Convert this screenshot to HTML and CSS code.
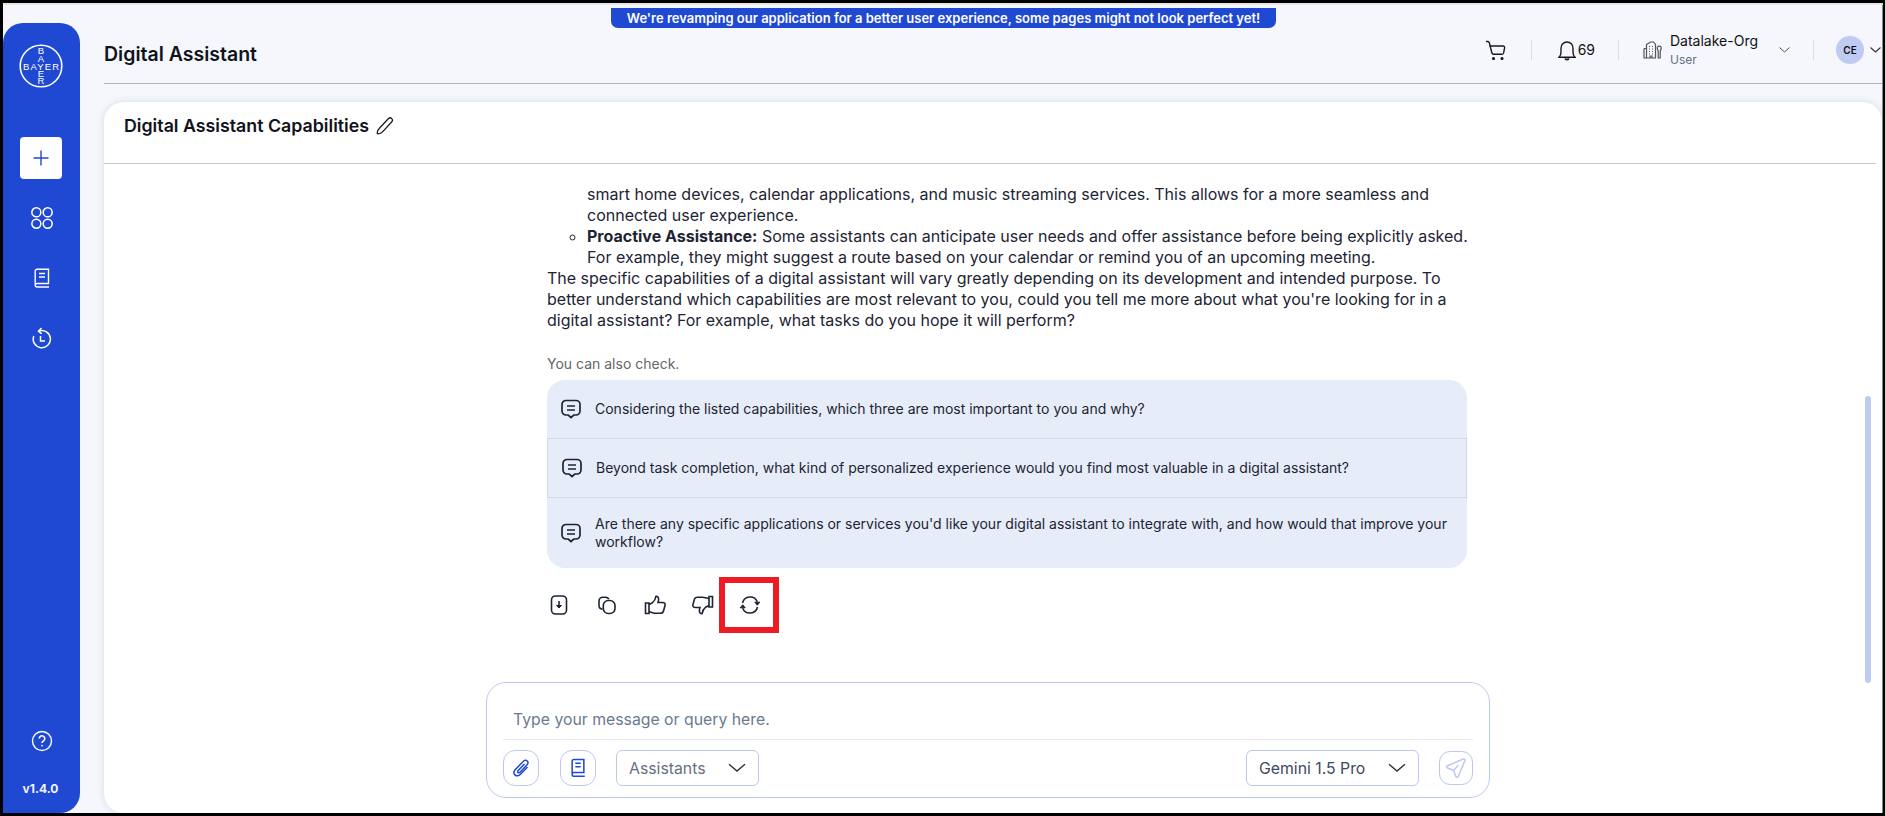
FILE: index.html
```html
<!DOCTYPE html>
<html lang="en">
<head>
<meta charset="utf-8">
<title>Digital Assistant</title>
<link rel="stylesheet" href="styles.css">
</head>
<body>
<div class="frame">
  <div class="top-line"></div>
  <div class="shell">
    <aside class="sidebar">
      <svg class="logo" viewBox="0 0 44 44" width="44" height="44">
        <circle cx="22" cy="22" r="20.8" fill="none" stroke="#fff" stroke-width="1.6"/>
        <text class="logo-text" x="4" y="25.500" textLength="36" lengthAdjust="spacing">BAYER</text>
        <text class="logo-text logo-mid" x="22" y="10.200">B</text>
        <text class="logo-text logo-mid" x="22" y="17.600">A</text>
        <text class="logo-text logo-mid" x="22" y="33">E</text>
        <text class="logo-text logo-mid" x="22" y="40.400">R</text>
      </svg>
      <button class="new-btn">
        <svg viewBox="0 0 18 18" width="18" height="18"><path d="M9 1.5v15M1.5 9h15" stroke="#1f48d3" stroke-width="1.4" fill="none"/></svg>
      </button>
      <nav class="side-nav">
        <svg class="apps-icon" viewBox="0 0 22 22" width="24" height="24" fill="none" stroke="#fff" stroke-width="1.4"><rect x="1.7" y="1.7" width="8.2" height="8.2" rx="4"/><rect x="12.1" y="1.7" width="8.2" height="8.2" rx="4"/><rect x="1.7" y="12.1" width="8.2" height="8.2" rx="4"/><rect x="12.1" y="12.1" width="8.2" height="8.2" rx="4"/></svg>
        <svg viewBox="0 0 22 22" width="22" height="22" fill="none" stroke="#fff" stroke-width="1.4"><path d="M4.2 17V4.200A2 2 0 0 1 6.200 2.200h11.300V16.500H6.200A2 2 0 0 0 4.200 18.500 2 2 0 0 0 6.200 20H18"/><path d="M8 6.500h6M8 10h6"/></svg>
        <svg viewBox="0 0 22 22" width="22" height="22" fill="none" stroke="#fff" stroke-width="1.5"><path d="M8 4a8.600 8.600 0 1 1-5.200 5"/><path d="M10.500 1 7.500 4.200l3.200 2.600"/><path d="M9.500 9v5h4.500"/></svg>
      </nav>
      <div class="side-foot">
        <svg viewBox="0 0 22 22" width="22" height="22" fill="none" stroke="#fff" stroke-width="1.4"><circle cx="11" cy="11" r="9.500"/><path d="M8.200 8.600a2.800 2.800 0 1 1 4.400 2.300c-1 .7-1.600 1.100-1.600 2.100" stroke-width="1.600"/><circle cx="11" cy="15.600" r=".9" fill="#fff" stroke="none"/></svg>
        <span class="version">v1.4.0</span>
      </div>
    </aside>
    <div class="main">
      <div class="banner">We're revamping our application for a better user experience, some pages might not look perfect yet!</div>
      <header class="topbar">
        <h1 class="page-title">Digital Assistant</h1>
        <div class="top-actions">
          <svg class="cart" viewBox="0 0 22 21" width="22" height="21" fill="none" stroke="#1a1a1a" stroke-width="1.4"><path d="M1 1.500h1.800c.8 0 1.200.4 1.500 1.200l2.600 10.300c.2.800.8 1.300 1.600 1.300h8.200c1 0 1.600-.5 1.900-1.400l1-4.900c.2-1.300-.5-2-1.800-2H4.200"/><circle cx="8.500" cy="18.500" r=".9" fill="#1a1a1a"/><circle cx="17" cy="18.500" r=".9" fill="#1a1a1a"/></svg>
          <span class="sep"></span>
          <div class="bell-group">
            <svg viewBox="0 0 18 21" width="18" height="21" fill="none" stroke="#1a1a1a" stroke-width="1.4"><path d="M1 17.300c1.500-1.300 2-2.500 2-5V8a6 6 0 0 1 12 0v4.300c0 2.500.5 3.700 2 5z"/><path d="M7 18.500c.3 1.700 3.700 1.700 4 0" fill="#1a1a1a"/></svg>
            <span class="bell-count">69</span>
          </div>
          <span class="sep"></span>
          <div class="org">
            <svg viewBox="0 0 19 18" width="19" height="18" fill="none" stroke="#555" stroke-width="1.200"><path d="M1 7.500h2.500M1 7.500V17h2.500"/><path d="M3.500 3.500l4-2.500h3l2 2.500V17h-9z"/><path d="M6 5.500h1M9 5.500h1M6 8h1M9 8h1M6 10.500h1M9 10.500h1M6 13h1M9 13h1M7 17v-2h2v2"/><path d="M14.500 8a2 2 0 1 1 3.500 0c0 1-.8 1.300-.8 2.500V17h-2v-6.500c0-1.200-.7-1.500-.7-2.500z"/></svg>
            <div class="org-text">
              <div class="org-name">Datalake-Org</div>
              <div class="org-role">User</div>
            </div>
            <svg class="org-chev" viewBox="0 0 11 6" width="11" height="6" fill="none" stroke="#555" stroke-width="1"><path d="M.5.500l5 4.500 5-4.500"/></svg>
          </div>
          <span class="sep sep-last"></span>
          <div class="avatar">CE</div>
          <svg class="avatar-chev" viewBox="0 0 11 6" width="11" height="6" fill="none" stroke="#333" stroke-width="1.100"><path d="M.5.500l5 4.500 5-4.500"/></svg>
        </div>
      </header>
      <section class="card">
        <div class="card-head">
          <h2 class="card-title">Digital Assistant Capabilities</h2>
          <svg viewBox="0 0 18 18" width="18" height="18" fill="none" stroke="#1a1a1a" stroke-width="1.300"><path d="M12.500 1.500c1-.9 2.300-.8 3.200.1s1 2.200.1 3.200L6.800 14.600c-1.200 1.300-3 2.100-4.800 2.200-.6 0-.9-.3-.8-.9.1-1.800.9-3.500 2.200-4.700z"/></svg>
        </div>
        <div class="chat">
          <ul class="answer-list">
            <li class="no-mark">smart home devices, calendar applications, and music streaming services. This allows for a more seamless and connected user experience.</li>
            <li><strong>Proactive Assistance:</strong> Some assistants can anticipate user needs and offer assistance before being explicitly asked. For example, they might suggest a route based on your calendar or remind you of an upcoming meeting.</li>
          </ul>
          <p class="answer">The specific capabilities of a digital assistant will vary greatly depending on its development and intended purpose. To better understand which capabilities are most relevant to you, could you tell me more about what you're looking for in a digital assistant? For example, what tasks do you hope it will perform?</p>
          <p class="also">You can also check.</p>
          <div class="chips">
            <div class="chip chip-a">
              <svg viewBox="0 0 20 20" width="20" height="20" fill="none" stroke="#1d2433" stroke-width="1.700"><path d="M5 1.500h10a4 4 0 0 1 4 4v6.500a4 4 0 0 1-4 4h-2.200l-2.800 2.500-2.800-2.500H5a4 4 0 0 1-4-4V5.500a4 4 0 0 1 4-4z"/><path d="M6 7h8M6 11h8"/></svg>
              <span>Considering the listed capabilities, which three are most important to you and why?</span>
            </div>
            <div class="chip chip-b">
              <svg viewBox="0 0 20 20" width="20" height="20" fill="none" stroke="#1d2433" stroke-width="1.700"><path d="M5 1.500h10a4 4 0 0 1 4 4v6.500a4 4 0 0 1-4 4h-2.200l-2.800 2.500-2.800-2.500H5a4 4 0 0 1-4-4V5.500a4 4 0 0 1 4-4z"/><path d="M6 7h8M6 11h8"/></svg>
              <span>Beyond task completion, what kind of personalized experience would you find most valuable in a digital assistant?</span>
            </div>
            <div class="chip chip-c">
              <svg viewBox="0 0 20 20" width="20" height="20" fill="none" stroke="#1d2433" stroke-width="1.700"><path d="M5 1.500h10a4 4 0 0 1 4 4v6.500a4 4 0 0 1-4 4h-2.200l-2.800 2.500-2.800-2.500H5a4 4 0 0 1-4-4V5.500a4 4 0 0 1 4-4z"/><path d="M6 7h8M6 11h8"/></svg>
              <span>Are there any specific applications or services you'd like your digital assistant to integrate with, and how would that improve your workflow?</span>
            </div>
          </div>
          <div class="actions">
            <span class="act"><svg viewBox="0 0 20 20" width="20" height="20" fill="none" stroke="#1d2433" stroke-width="1.600"><rect x="2.500" y="1" width="15" height="18" rx="4"/><path d="M10 6v6"/><path d="M7.500 10.500l2.500 2.500 2.500-2.500z" fill="#1d2433" stroke-width="1"/></svg></span>
            <span class="act"><svg viewBox="0 0 20 20" width="20" height="20" fill="none" stroke="#1d2433" stroke-width="1.600"><path d="M5.500 14.200c-2-.2-3.500-1.600-3.500-3.700V6.200c0-2.400 1.500-4 4-4h2.500c1.500 0 2.700.7 3.300 2"/><rect x="6.300" y="5.500" width="11.700" height="13" rx="5"/></svg></span>
            <span class="act"><svg viewBox="0 0 22 20" width="22" height="20" fill="none" stroke="#1d2433" stroke-width="1.600"><path d="M1.500 8h3.500v10.500H1.500z"/><path d="M5 9.500l3.500-1.800c1.700-1.200 3-3.700 3.300-6.200 2.500-.5 3.500 2 2.200 6h4.500c2 0 3 1.300 2.500 3l-1.500 5.500c-.4 1.500-1.500 2.300-3 2.300h-5c-2 0-3.500-1-6.500-1.500"/></svg></span>
            <span class="act"><svg viewBox="0 0 22 20" width="22" height="20" fill="none" stroke="#1d2433" stroke-width="1.600"><path d="M20.500 12h-3.500V1.500h3.500z"/><path d="M17 10.500l-3.500 1.800c-1.700 1.200-3 3.700-3.300 6.200-2.500.5-3.500-2-2.200-6H3.500c-2 0-3-1.300-2.500-3l1.500-5.500C2.900 3 4 2.200 5.500 2.200h5c2 0 3.500 1 6.500 1.500"/></svg></span>
            <span class="act act-marked"><svg viewBox="0 0 22 22" width="22" height="22" fill="none" stroke="#1d2433" stroke-width="1.600"><path d="M3.500 9a7.800 7.800 0 0 1 14.800-1.200"/><path d="M18.500 13a7.800 7.800 0 0 1-14.800 1.200"/><path d="M15.800 8.200h5l-2.500 3z" fill="#1d2433" stroke-width="1"/><path d="M6.200 13.800h-5l2.500-3z" fill="#1d2433" stroke-width="1"/></svg></span>
          </div>
        </div>
        <div class="composer">
          <div class="prompt">Type your message or query here.</div>
          <div class="composer-bar">
            <span class="tool">
              <svg viewBox="0 0 20 20" width="20" height="20" fill="none" stroke="#1f48d3" stroke-width="1.500"><path d="M16.500 9l-7 7.300c-1.800 1.900-4.200 2-5.600.6s-1.200-3.700.5-5.500l7.800-8c1.200-1.300 3-1.400 4-.4s.9 2.700-.3 4L9 14.200c-.6.700-1.500.8-2 .3s-.4-1.400.2-2l6.300-6.500"/></svg>
            </span>
            <span class="tool tool-gap">
              <svg viewBox="0 0 20 22" width="18" height="20" fill="none" stroke="#1f48d3" stroke-width="1.700"><path d="M3.500 17V3.500a2 2 0 0 1 2-2h11V16h-11a2 2 0 0 0-2 2 2 2 0 0 0 2 2.200H17.500"/><path d="M7 5.800h6M7 9.500h6"/></svg>
            </span>
            <div class="select select-assist"><span>Assistants</span>
              <svg viewBox="0 0 18 10" width="18" height="10" fill="none" stroke="#333" stroke-width="1.500"><path d="M1 1.200l8 6.800 8-6.800"/></svg>
            </div>
            <div class="bar-spacer"></div>
            <div class="select select-model"><span>Gemini 1.5 Pro</span>
              <svg viewBox="0 0 18 10" width="18" height="10" fill="none" stroke="#333" stroke-width="1.500"><path d="M1 1.200l8 6.800 8-6.800"/></svg>
            </div>
            <span class="send">
              <svg viewBox="0 0 22 22" width="22" height="22" fill="none" stroke="#bcc8f0" stroke-width="1.500"><path d="M2.500 8.700L18.300 2c1.100-.4 2 .5 1.600 1.600L13.300 19.500c-.5 1.200-2 1.100-2.500-.1l-2-5.500c-.2-.5-.4-.7-.9-.9l-5.400-2c-1.200-.5-1.300-1.900 0-2.300z"/><path d="M8.500 13.200l5-5"/></svg>
            </span>
          </div>
        </div>
        <div class="scroll-thumb"></div>
      </section>
    </div>
  </div>
</div>
</body>
</html>
```

FILE: styles.css
```css
* { box-sizing: border-box; }
html, body { margin: 0; padding: 0; height: 100%; overflow: hidden; }
body { font-family: Inter, "Noto Sans", sans-serif; color: #1d2433; background: #000; }

.frame {
  width: 1885px;
  height: 816px;
  border-style: solid;
  border-color: #000;
  border-width: 3px 2px 3px 3px;
  background: #f5f7fd;
  display: flex;
  flex-direction: column;
  overflow: hidden;
}
.top-line { height: 2px; background: #e6e6e6; flex: none; }
.shell { flex: 1; display: flex; min-height: 0; border-right: 1px solid #8a8a8a; }

.sidebar {
  width: 77px;
  flex: none;
  margin-top: 18px;
  background: #1f48d3;
  border-radius: 20px 20px 20px 0;
  display: flex;
  flex-direction: column;
  align-items: center;
  padding-top: 21px;
}
.logo { margin-left: -1px; }
.logo-text {
  font-family: "Liberation Sans", sans-serif;
  font-size: 9.500px;
  fill: #fff;
}
.logo-mid { text-anchor: middle; }
.new-btn {
  width: 42px;
  height: 42px;
  margin-top: 49px;
  margin-left: -1px;
  border: 0;
  padding: 0;
  border-radius: 4px;
  background: #fff;
  display: flex;
  align-items: center;
  justify-content: center;
}
.side-nav {
  display: flex;
  flex-direction: column;
  align-items: center;
  gap: 38px;
  margin-top: 28px;
  padding-left: 1px;
}
.apps-icon { margin: -1px; }
.side-foot {
  margin-top: auto;
  display: flex;
  flex-direction: column;
  align-items: center;
  gap: 29px;
  padding-bottom: 17px;
  margin-left: -2px;
}
.side-foot svg { margin-left: 2px; }
.version { color: #f1f4ff; font-size: 12px; font-weight: 700; line-height: 15px; }

.main {
  flex: 1;
  min-width: 0;
  position: relative;
  display: flex;
  flex-direction: column;
  padding-left: 24px;
}
.banner {
  position: absolute;
  top: 3px;
  left: 531px;
  width: 665px;
  height: 20px;
  background: #1f48d3;
  color: #fff;
  font-size: 13px;
  font-weight: 600;
  line-height: 20px;
  text-align: center;
  white-space: nowrap;
  border-radius: 0 0 7px 7px;
}
.topbar {
  flex: none;
  height: 79px;
  padding-top: 18px;
  border-bottom: 1px solid #b2b4bb;
  display: flex;
  align-items: flex-start;
  justify-content: space-between;
}
.page-title { margin: 19px 0 0; font-size: 19.500px; font-weight: 600; line-height: 24px; color: #10131a; }
.top-actions { display: flex; align-items: center; height: 28px; margin-top: 13px; padding-right: 1px; }
.sep { width: 1px; height: 20px; background: #d9dce3; margin: 0 24px; }
.bell-group { display: flex; align-items: center; gap: 2px; margin: 0 -1px 0 2px; }
.bell-count { font-size: 14px; line-height: 18px; color: #111; }
.org { display: flex; align-items: center; }
.org-text { margin-left: 8px; width: 109px; }
.org-name { font-size: 14px; line-height: 18px; color: #111; }
.org-role { font-size: 12px; line-height: 16px; color: #66707f; margin-top: 2px; }
.sep-last { margin: 0 22px 0 23px; }
.avatar {
  width: 28px;
  height: 28px;
  border-radius: 50%;
  background: #bfcbf2;
  color: #111;
  font-size: 10px;
  font-weight: 600;
  display: flex;
  align-items: center;
  justify-content: center;
}
.avatar-chev { margin: 0 0 0 6px; }

.card {
  flex: 1;
  min-height: 0;
  margin-top: 18px;
  background: #fff;
  border-radius: 20px 20px 0 20px;
  box-shadow: 0 0 9px rgba(30, 35, 60, .12);
  position: relative;
  display: flex;
  flex-direction: column;
  overflow: hidden;
}
.card-head {
  flex: none;
  height: 62px;
  margin-right: 6px;
  padding: 12px 20px 0;
  border-bottom: 1px solid #c9cbd0;
  display: flex;
  align-items: flex-start;
  gap: 7px;
}
.card-title { margin: 0; font-size: 17.800px; font-weight: 600; line-height: 24px; color: #10131a; }
.card-head svg { margin-top: 3px; }

.chat { flex: 1; min-height: 0; overflow: hidden; padding: 20px 0 0 443px; }
.answer-list, .answer { width: 924px; font-size: 16px; line-height: 21px; color: #1d2433; }
.answer-list { margin: 0; padding: 0 0 0 40px; list-style: circle; }
.no-mark { list-style: none; }
.answer { margin: 0; }
.also { margin: 24px 0 0; font-size: 14px; line-height: 18px; color: #666; }
.chips {
  width: 920px;
  margin-top: 7px;
  background: #e6ecf8;
  border-radius: 18px;
  font-size: 14px;
  line-height: 18px;
  color: #1d2433;
  overflow: hidden;
}
.chip { display: flex; align-items: center; gap: 14px; padding-left: 14px; padding-right: 14px; }
.chip svg { flex: none; }
.chip-a { height: 58px; }
.chip-b { height: 60px; padding-left: 14px; border: 1px solid #d0d8ea; }
.chip-c { height: 70px; }
.actions { display: flex; align-items: center; height: 56px; margin: 9px 0 0 -12px; }
.act { width: 48px; display: flex; justify-content: center; flex: none; }
.act-marked {
  width: 60px;
  height: 56px;
  margin-left: -8px;
  padding-left: 2px;
  border: 6px solid #ed1c24;
  align-items: center;
}

.composer {
  flex: none;
  width: 1004px;
  height: 116px;
  margin: 0 0 15px 382px;
  border: 1px solid #bcc8f0;
  border-radius: 20px;
  padding: 0 16px;
  background: #fff;
}
.prompt {
  height: 57px;
  padding: 26px 0 0 10px;
  font-size: 15.800px;
  line-height: 22px;
  color: #6b7a90;
  border-bottom: 1px solid #e7e9ee;
}
.composer-bar { display: flex; align-items: center; height: 36px; margin-top: 10px; }
.tool {
  width: 36px;
  height: 36px;
  border: 1px solid #bcc8f0;
  border-radius: 12px;
  display: flex;
  align-items: center;
  justify-content: center;
  flex: none;
}
.tool-gap { margin-left: 21px; }
.select {
  height: 36px;
  border: 1px solid #bcc8f0;
  border-radius: 6px;
  display: flex;
  align-items: center;
  justify-content: space-between;
  font-size: 15.800px;
  padding: 0 12px 0 12px;
  flex: none;
}
.select-assist { width: 143px; margin-left: 20px; color: #66707f; }
.select-model { width: 173px; color: #3c4a60; }
.bar-spacer { flex: 1; }
.send {
  width: 34px;
  height: 34px;
  margin-left: 20px;
  border: 1px solid #bcc8f0;
  border-radius: 11px;
  display: flex;
  align-items: center;
  justify-content: center;
  flex: none;
}
.scroll-thumb {
  position: absolute;
  top: 294px;
  right: 11px;
  width: 6px;
  height: 287px;
  border-radius: 3px;
  background: #bfcbf2;
}
```
